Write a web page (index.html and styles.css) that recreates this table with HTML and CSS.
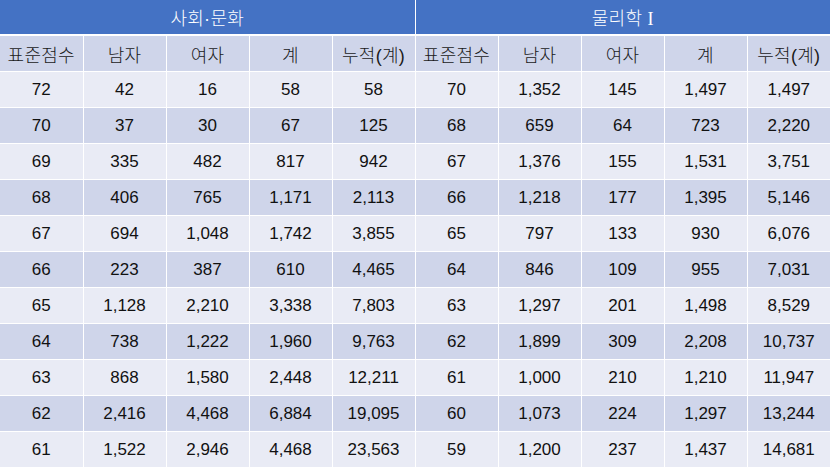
FILE: index.html
```html
<!DOCTYPE html>
<html lang="ko">
<head>
<meta charset="utf-8">
<link rel="stylesheet" href="styles.css">
</head>
<body>
<table class="grid">
  <colgroup>
    <col><col><col><col><col><col><col><col><col><col>
  </colgroup>
  <thead>
    <tr class="title-row">
      <th colspan="5">사회·문화</th>
      <th colspan="5">물리학 <span class="roman">I</span></th>
    </tr>
    <tr class="head-row">
      <th>표준점수</th><th>남자</th><th>여자</th><th>계</th><th>누적(계)</th>
      <th>표준점수</th><th>남자</th><th>여자</th><th>계</th><th>누적(계)</th>
    </tr>
  </thead>
  <tbody>
    <tr><td>72</td><td>42</td><td>16</td><td>58</td><td>58</td><td>70</td><td>1,352</td><td>145</td><td>1,497</td><td>1,497</td></tr>
    <tr><td>70</td><td>37</td><td>30</td><td>67</td><td>125</td><td>68</td><td>659</td><td>64</td><td>723</td><td>2,220</td></tr>
    <tr><td>69</td><td>335</td><td>482</td><td>817</td><td>942</td><td>67</td><td>1,376</td><td>155</td><td>1,531</td><td>3,751</td></tr>
    <tr><td>68</td><td>406</td><td>765</td><td>1,171</td><td>2,113</td><td>66</td><td>1,218</td><td>177</td><td>1,395</td><td>5,146</td></tr>
    <tr><td>67</td><td>694</td><td>1,048</td><td>1,742</td><td>3,855</td><td>65</td><td>797</td><td>133</td><td>930</td><td>6,076</td></tr>
    <tr><td>66</td><td>223</td><td>387</td><td>610</td><td>4,465</td><td>64</td><td>846</td><td>109</td><td>955</td><td>7,031</td></tr>
    <tr><td>65</td><td>1,128</td><td>2,210</td><td>3,338</td><td>7,803</td><td>63</td><td>1,297</td><td>201</td><td>1,498</td><td>8,529</td></tr>
    <tr><td>64</td><td>738</td><td>1,222</td><td>1,960</td><td>9,763</td><td>62</td><td>1,899</td><td>309</td><td>2,208</td><td>10,737</td></tr>
    <tr><td>63</td><td>868</td><td>1,580</td><td>2,448</td><td>12,211</td><td>61</td><td>1,000</td><td>210</td><td>1,210</td><td>11,947</td></tr>
    <tr><td>62</td><td>2,416</td><td>4,468</td><td>6,884</td><td>19,095</td><td>60</td><td>1,073</td><td>224</td><td>1,297</td><td>13,244</td></tr>
    <tr><td>61</td><td>1,522</td><td>2,946</td><td>4,468</td><td>23,563</td><td>59</td><td>1,200</td><td>237</td><td>1,437</td><td>14,681</td></tr>
  </tbody>
</table>
</body>
</html>
```

FILE: styles.css
```css
html, body {
  margin: 0;
  padding: 0;
  background: #ffffff;
}

.grid {
  width: 830px;
  border-collapse: collapse;
  table-layout: fixed;
  font-family: "Liberation Sans", "Noto Sans CJK KR", Arial, sans-serif;
  font-size: 17px;
  color: #000000;
}

.grid col {
  width: 83px;
}

.grid th,
.grid td {
  padding: 0;
  text-align: center;
  vertical-align: middle;
  border: 1px solid #ffffff;
  font-weight: normal;
  white-space: nowrap;
}

.grid th {
  font-size: 18px;
  font-weight: 300;
  letter-spacing: 0.3px;
}

.grid tr:first-child th {
  border-top: none;
}

.grid th:first-child,
.grid td:first-child {
  border-left: none;
}

.grid th:last-child,
.grid td:last-child {
  border-right: none;
}

.title-row th {
  height: 34px;
  background: #4472c4;
  color: #ffffff;
  border-bottom-width: 2px;
}

.roman {
  font-family: "Liberation Serif", "Times New Roman", serif;
  font-weight: normal;
}

.head-row th {
  height: 35px;
  background: #cfd5ea;
  color: #1a1a1a;
}

.grid tbody td {
  height: 35px;
  color: #111111;
}

.grid tbody tr:nth-child(odd) td {
  background: #e9ebf5;
}

.grid tbody tr:nth-child(even) td {
  background: #cfd5ea;
}
```
